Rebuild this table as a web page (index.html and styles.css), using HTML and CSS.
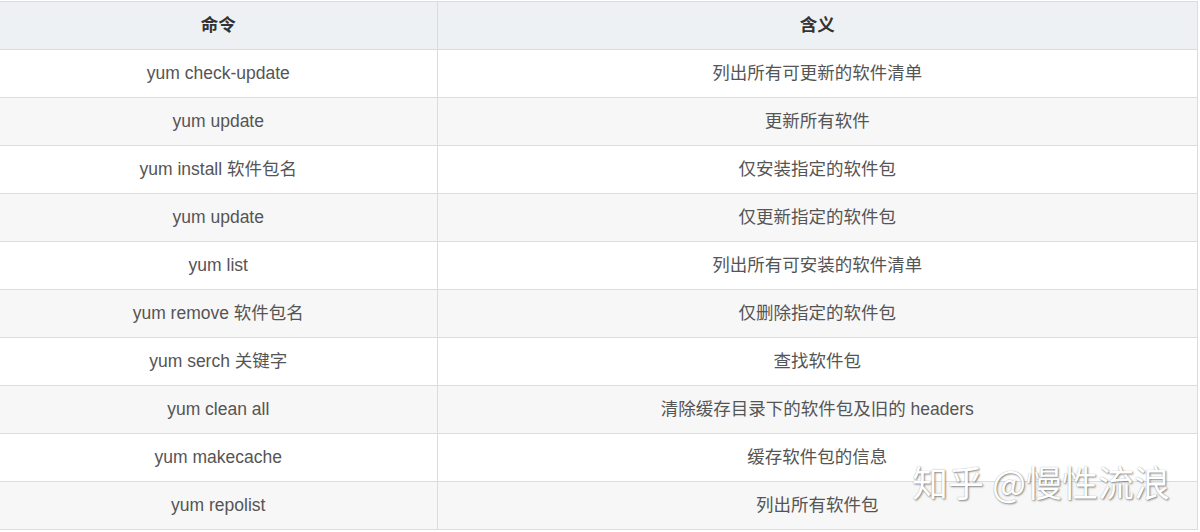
FILE: index.html
```html
<!DOCTYPE html>
<html lang="zh">
<head>
<meta charset="utf-8">
<title>yum 命令</title>
<link rel="stylesheet" href="styles.css">
</head>
<body>
<div class="wrap">
<table class="cmd-table">
  <colgroup><col class="c1"><col class="c2"></colgroup>
  <thead>
    <tr><th>命令</th><th>含义</th></tr>
  </thead>
  <tbody>
    <tr><td>yum check-update</td><td>列出所有可更新的软件清单</td></tr>
    <tr><td>yum update</td><td>更新所有软件</td></tr>
    <tr><td>yum install 软件包名</td><td>仅安装指定的软件包</td></tr>
    <tr><td>yum update</td><td>仅更新指定的软件包</td></tr>
    <tr><td>yum list</td><td>列出所有可安装的软件清单</td></tr>
    <tr><td>yum remove 软件包名</td><td>仅删除指定的软件包</td></tr>
    <tr><td>yum serch 关键字</td><td>查找软件包</td></tr>
    <tr><td>yum clean all</td><td>清除缓存目录下的软件包及旧的 headers</td></tr>
    <tr><td>yum makecache</td><td>缓存软件包的信息</td></tr>
    <tr><td>yum repolist</td><td>列出所有软件包</td></tr>
  </tbody>
</table>
<div class="watermark">知乎 @慢性流浪</div>
</div>
</body>
</html>
```
FILE: styles.css
```css
html, body {
  margin: 0;
  padding: 0;
  background: #fff;
}
.wrap {
  position: relative;
  width: 1200px;
  height: 532px;
  overflow: hidden;
  padding-top: 1px;
  box-sizing: border-box;
}
.cmd-table {
  width: 1198px;
  border-collapse: collapse;
  table-layout: fixed;
  font-family: "Liberation Sans", "Noto Sans CJK SC", sans-serif;
  font-size: 17.5px;
  line-height: 20px;
  color: #555;
}
.c1 { width: 437px; }
.cmd-table th,
.cmd-table td {
  height: 48px;
  padding: 0 8px 1px;
  text-align: center;
  vertical-align: middle;
  border: 1px solid #dcdcdc;
  box-sizing: border-box;
}
.cmd-table tr > :first-child { border-left: none; }
.cmd-table th {
  background: #eef1f4;
  color: #333;
  font-weight: bold;
}
.cmd-table tbody tr:nth-child(odd) { background: #fff; }
.cmd-table tbody tr:nth-child(even) { background: #f7f7f7; }
.watermark {
  position: absolute;
  left: 912px;
  top: 455px;
  font-family: "Noto Sans CJK SC", sans-serif;
  font-size: 36px;
  color: #fff;
  text-shadow: 1px 1px 2px rgba(0,0,0,0.45), 0 0 1px rgba(0,0,0,0.3);
  white-space: nowrap;
}
```
